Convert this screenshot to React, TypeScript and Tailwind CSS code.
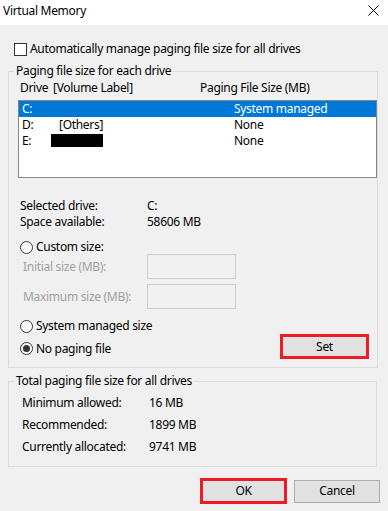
import React from 'react';

type Drive = { letter: string; label: string; size: string; redacted?: boolean };

const drives: Drive[] = [
    { letter: 'C:', label: '', size: 'System managed' },
    { letter: 'D:', label: '[Others]', size: 'None' },
    { letter: 'E:', label: '', size: 'None', redacted: true },
];

const Radio = ({ checked, label }: { checked?: boolean; label: string }) => (
    <div className="flex items-center h-[16px]">
        <span className="w-[13px] h-[13px] rounded-full border border-[#333333] bg-white flex items-center justify-center ml-[2px]">
            {checked && <span className="w-[7px] h-[7px] rounded-full bg-[#333333]" />}
        </span>
        <span className="ml-[3px]">{label}</span>
    </div>
);

const InfoRow = ({ label, value, valueX }: { label: string; value: string; valueX: string }) => (
    <div className="flex h-[16px] items-center">
        <span className={valueX}>{label}</span>
        <span>{value}</span>
    </div>
);

export default function App() {
    return (
        <div className="w-[388px] h-[511px] bg-[#f0f0f0] text-[12px] leading-[16px] tracking-[-0.3px] text-black font-['Noto_Sans',sans-serif] overflow-hidden">
            {/* title bar */}
            <div className="h-[25px] bg-white flex items-center justify-between pl-[3px] pr-[9px]">
                <span className="mt-[-4px]">Virtual Memory</span>
                <svg width="11" height="11" viewBox="0 0 11 11" className="mt-[-5px]">
                    <path d="M0.5 0.5 L10.5 10.5 M10.5 0.5 L0.5 10.5" stroke="#000" strokeWidth="1" />
                </svg>
            </div>

            {/* auto manage */}
            <div className="flex items-center h-[16px] mt-[16px] ml-[14px]">
                <span className="w-[13px] h-[13px] border border-[#333333] bg-white" />
                <span className="ml-[3px]">Automatically manage paging file size for all drives</span>
            </div>

            {/* per drive */}
            <fieldset className="ml-[8px] mt-[6px] w-[369px] border border-[#dcdcdc] pb-[8px]">
                <legend className="ml-[5px] px-[2px]">Paging file size for each drive</legend>
                <div className="ml-[9px]">
                    <div className="flex h-[16px] items-center mt-[1px] pl-[2px]">
                        <span className="w-[33px]">Drive</span>
                        <span className="w-[147px]">[Volume Label]</span>
                        <span>Paging File Size (MB)</span>
                    </div>
                    <div className="mt-[4px] w-[359px] h-[78px] border border-[#828790] bg-white">
                        {drives.map((d, i) => (
                            <div
                                key={d.letter}
                                className={
                                    i === 0
                                        ? 'flex items-center h-[16px] bg-[#0078d7] text-white pl-[3px]'
                                        : 'flex items-center h-[16px] pl-[3px]'
                                }
                            >
                                <span className="w-[37px]">{d.letter}</span>
                                <span className="w-[175px] flex items-center">
                                    {d.redacted ? <span className="block w-[52px] h-[13px] bg-black ml-[-8px] mt-[-2px]" /> : d.label}
                                </span>
                                <span>{d.size}</span>
                            </div>
                        ))}
                    </div>

                    <div className="mt-[20px] pl-[2px]">
                        <InfoRow label="Selected drive:" value="C:" valueX="w-[127px]" />
                        <InfoRow label="Space available:" value="58606 MB" valueX="w-[127px]" />
                    </div>

                    <div className="mt-[9px]">
                        <Radio label="Custom size:" />
                    </div>
                    <div className="flex items-center h-[25px] mt-[-1px] text-[#a0a0a0]">
                        <span className="w-[129px] pl-[5px]">Initial size (MB):</span>
                        <span className="w-[89px] h-[25px] border border-[#cccccc] bg-[#f0f0f0]" />
                    </div>
                    <div className="flex items-center h-[25px] mt-[5px] text-[#a0a0a0]">
                        <span className="w-[129px] pl-[5px]">Maximum size (MB):</span>
                        <span className="w-[89px] h-[25px] border border-[#cccccc] bg-[#f0f0f0]" />
                    </div>

                    <div className="mt-[9px]">
                        <Radio label="System managed size" />
                    </div>
                    <div className="flex items-center justify-between h-[25px] pr-[8px]">
                        <div className="pt-[4px]">
                            <Radio checked label="No paging file" />
                        </div>
                        <button className="w-[89px] h-[25px] border-[3px] border-[#ed1c24] bg-[#e1e1e1] flex items-center justify-center">
                            Set
                        </button>
                    </div>
                </div>
            </fieldset>

            {/* totals */}
            <fieldset className="ml-[8px] mt-[5px] w-[369px] border border-[#dcdcdc] pb-[11px]">
                <legend className="ml-[5px] px-[2px]">Total paging file size for all drives</legend>
                <div className="ml-[13px] flex flex-col gap-[6px] mt-[6px]">
                    <InfoRow label="Minimum allowed:" value="16 MB" valueX="w-[127px]" />
                    <InfoRow label="Recommended:" value="1899 MB" valueX="w-[127px]" />
                    <InfoRow label="Currently allocated:" value="9741 MB" valueX="w-[127px]" />
                </div>
            </fieldset>

            {/* buttons */}
            <div className="flex justify-end items-center gap-[7px] pr-[8px] mt-[11px]">
                <button className="w-[87px] h-[26px] border-[3px] border-[#ed1c24] bg-[#e1e1e1] flex items-center justify-center">
                    OK
                </button>
                <button className="w-[86px] h-[23px] border border-[#adadad] bg-[#e1e1e1] flex items-center justify-center">
                    Cancel
                </button>
            </div>
        </div>
    );
}
